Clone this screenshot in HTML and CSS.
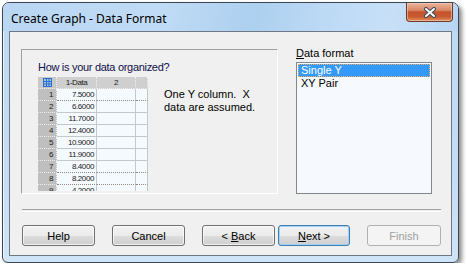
FILE: index.html
```html
<!DOCTYPE html>
<html lang="en">
<head>
  <meta charset="UTF-8">
  <title>Create Graph - Data Format</title>
  <link rel="stylesheet" href="styles.css">
</head>
<body>
  <div class="window">
    <div class="titlebar">
      <span class="title">Create Graph - Data Format</span>
      <button class="close" aria-label="Close">
        <svg width="14" height="11" viewBox="0 0 14 11">
          <path d="M3 2 L11 9 M11 2 L3 9" stroke="#3b4a5a" stroke-width="4" stroke-linecap="round"/>
          <path d="M3 2 L11 9 M11 2 L3 9" stroke="#fff" stroke-width="2" stroke-linecap="round"/>
        </svg>
      </button>
    </div>

    <div class="client">
      <div class="main">
        <div class="group">
          <div class="question">How is your data organized?</div>
          <div class="preview">
            <div class="sheet">
              <div class="hd corner">
                <svg width="9" height="9" viewBox="0 0 9 9">
                  <rect x="0.5" y="0.5" width="8" height="8" fill="#9fc6f0" stroke="#2f6fc8"/>
                  <path d="M0 3.5 H9 M0 6 H9 M3.5 0 V9 M6 0 V9" stroke="#2f6fc8"/>
                </svg>
              </div>
              <div class="hd col">1-Data</div>
              <div class="hd col">2</div>
              <div class="hd col"></div>

              <div class="hd row">1</div><div class="cell dot">7.5000</div><div class="cell dot"></div><div class="cell dot"></div>
              <div class="hd row">2</div><div class="cell">6.6000</div><div class="cell"></div><div class="cell"></div>
              <div class="hd row">3</div><div class="cell">11.7000</div><div class="cell"></div><div class="cell"></div>
              <div class="hd row">4</div><div class="cell">12.4000</div><div class="cell"></div><div class="cell"></div>
              <div class="hd row">5</div><div class="cell">10.9000</div><div class="cell"></div><div class="cell"></div>
              <div class="hd row">6</div><div class="cell">11.9000</div><div class="cell"></div><div class="cell"></div>
              <div class="hd row">7</div><div class="cell dot">8.4000</div><div class="cell dot"></div><div class="cell dot"></div>
              <div class="hd row">8</div><div class="cell dot">8.2000</div><div class="cell dot"></div><div class="cell dot"></div>
              <div class="hd row">9</div><div class="cell">4.2000</div><div class="cell"></div><div class="cell"></div>
            </div>
            <p class="note">One Y column.&nbsp; X<br>data are assumed.</p>
          </div>
        </div>

        <div class="format">
          <div class="label"><u>D</u>ata format</div>
          <ul class="listbox">
            <li class="selected">Single Y</li>
            <li>XY Pair</li>
          </ul>
        </div>
      </div>

      <div class="separator"></div>

      <div class="buttons">
        <button class="btn help">Help</button>
        <button class="btn cancel">Cancel</button>
        <button class="btn back">&lt; <u>B</u>ack</button>
        <button class="btn next default"><u>N</u>ext &gt;</button>
        <button class="btn finish" disabled>Finish</button>
      </div>
    </div>
  </div>
</body>
</html>
```

FILE: styles.css
```css
/* Page */
body {
  margin: 0;
  background: #fff;
  font-family: 'Liberation Sans', Arial, sans-serif;
  font-size: 11px;
  color: #000;
}

/* Window frame */
.window {
  box-sizing: border-box;
  margin: 2px 0 0 2px;
  width: 457px;
  height: 261px;
  display: flex;
  flex-direction: column;
  border: 1px solid #3c4550;
  border-radius: 7px 7px 6px 6px;
  background: linear-gradient(to bottom, #bcd8f4, #c6def5 70%, #cfe4f7);
  box-shadow: inset 1px 1px 0 rgba(255, 255, 255, 0.7), 3px 3px 4px rgba(0, 0, 0, 0.45);
}

.titlebar {
  height: 28px;
  display: flex;
  justify-content: space-between;
  align-items: flex-start;
  border-radius: 6px 6px 0 0;
  background: linear-gradient(100deg, #b9d6f3 0%, #c0dbf5 35%, #acd0ef 55%, #bcd9f5 70%, #c7e0f7 85%, #b7d5f2 100%);
}

.title {
  padding: 7px 0 0 8px;
  font-family: 'Segoe UI', 'Noto Sans', sans-serif;
  font-size: 12px;
  color: #000;
}

.close {
  margin: 0 5px 0 0;
  width: 47px;
  height: 19px;
  padding: 0;
  display: flex;
  align-items: center;
  justify-content: center;
  border: 1px solid #6c3a2c;
  border-top: none;
  border-radius: 0 0 4px 4px;
  background: linear-gradient(to bottom, #e9b29b 0%, #d98a68 40%, #c4542c 50%, #c65a30 75%, #e0905c 100%);
  box-shadow: inset 0 0 0 1px rgba(255, 220, 200, 0.5);
}

/* Dialog body */
.client {
  flex: 1;
  margin: 0 6px 6px 6px;
  border: 1px solid #6e7884;
  background: #f0f0f0;
  display: flex;
  flex-direction: column;
}

.main {
  display: flex;
  align-items: flex-start;
  padding-left: 11px;
}

.group {
  box-sizing: border-box;
  margin-top: 17px;
  width: 257px;
  height: 145px;
  padding: 10px 0 0 16px;
  border: 1px solid;
  border-color: #a0a0a0 #fff #fff #a0a0a0;
  overflow: hidden;
}

.question {
  font-size: 11px;
  letter-spacing: -0.3px;
  line-height: 14px;
  color: #10104a;
  margin-bottom: 3px;
}

.preview {
  display: flex;
  align-items: flex-start;
}

/* Worksheet preview */
.sheet {
  width: 110px;
  height: 114px;
  overflow: hidden;
  display: grid;
  grid-template-columns: 19px 40px 39px 12px;
  grid-auto-rows: 12px;
  font-size: 8px;
  letter-spacing: -0.4px;
  line-height: 11px;
}

.hd {
  box-sizing: border-box;
  background: #c8c8c8;
  border-right: 1px dotted #f0f0f0;
  border-bottom: 1px dotted #ececec;
  color: #1a1a1a;
}

.hd.col {
  background: #cfcfcf;
  text-align: center;
}

.hd.row {
  background: #bfbfbf;
  text-align: right;
  padding-right: 3px;
}

.corner {
  display: flex;
  align-items: center;
  justify-content: center;
}

.cell {
  box-sizing: border-box;
  background: #f5faff;
  border-right: 1px solid #c4c8cc;
  border-bottom: 1px solid #c4c8cc;
  text-align: right;
  padding-right: 2px;
  color: #222;
}

.cell.dot {
  border-bottom: 1px dotted #8c8c8c;
}

.note {
  margin: 11px 0 0 16px;
  line-height: 13px;
}

/* Format list */
.format {
  margin: 14px 0 0 18px;
}

.label {
  line-height: 14px;
  margin-bottom: 2px;
}

.listbox {
  box-sizing: border-box;
  width: 136px;
  height: 132px;
  margin: 0;
  padding: 1px;
  list-style: none;
  border: 1px solid #828790;
  background: #f6fafe;
}

.listbox li {
  height: 13px;
  line-height: 13px;
  padding-left: 3px;
}

.listbox li.selected {
  box-sizing: border-box;
  background: #3399ff;
  color: #fff;
  border: 1px dotted #f4b060;
  line-height: 11px;
  padding-left: 2px;
}

.separator {
  margin: 15px 0 0 12px;
  width: 419px;
  height: 1px;
  border-top: 1px solid #a0a0a0;
  border-bottom: 1px solid #fff;
}

/* Buttons */
.buttons {
  display: flex;
  margin: 13px 0 0 12px;
}

.btn {
  width: 73px;
  height: 21px;
  padding: 0;
  font-family: 'Liberation Sans', Arial, sans-serif;
  font-size: 11px;
  color: #000;
  border: 1px solid #707070;
  border-radius: 3px;
  background: linear-gradient(to bottom, #f2f2f2 0%, #ebebeb 50%, #dddddd 51%, #cfcfcf 100%);
  box-shadow: inset 0 0 0 1px rgba(255, 255, 255, 0.7);
}

.cancel,
.back {
  margin-left: 17px;
}

.next {
  margin-left: 3px;
  width: 72px;
}

.btn.default {
  border-color: #3c7fb1;
  box-shadow: inset 0 0 0 1px #9fd3f5;
}

.finish {
  margin-left: 17px;
  width: 74px;
}

.btn:disabled {
  color: #a0a0a0;
  border-color: #adb2b5;
  background: #f4f4f4;
  box-shadow: none;
}
```
